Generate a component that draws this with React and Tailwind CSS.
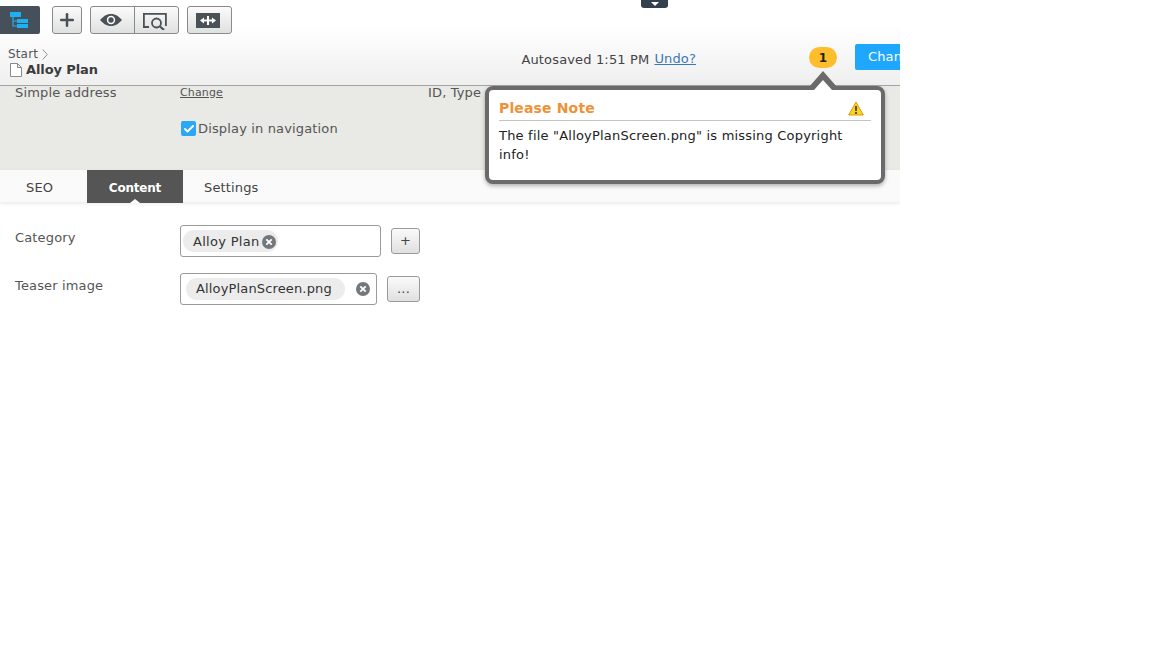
import React from 'react';
import { Plus, Check } from 'lucide-react';

const ToolButton = ({ className = '', children }) => (
  <div className={`flex h-[28px] items-center justify-center border border-[#8a8a8a] bg-gradient-to-b from-[#fbfbfb] to-[#dfe0e0] ${className}`}>
    {children}
  </div>
);

const RemoveIcon = ({ className = '' }) => (
  <svg viewBox="0 0 14 14" className={`h-[14px] w-[14px] ${className}`}>
    <circle cx="7" cy="7" r="7" fill="#74787b" />
    <path d="M4.300 4.300l5.400 5.400M9.700 4.300l-5.400 5.400" stroke="#fff" strokeWidth="1.800" />
  </svg>
);

const Header = () => (
  <div className="h-[86px] border-b border-[#a3a3a0] bg-gradient-to-b from-white from-30% to-[#efefef]">
    <div className="relative flex h-[34px] items-start pt-[6px]">
      <div className="flex h-[28px] w-[40px] items-center justify-center rounded-r-[2px] bg-[#46505a]">
        <svg viewBox="0 0 20 18" className="mr-[2px] h-[18px] w-[20px]">
          <path d="M1 1h11v5H1zM8 8h11v4H8zM8 13h11v4H8z" fill="#1eb0f0" />
          <path d="M4 6v9h4M4 10h4" stroke="#1eb0f0" strokeWidth="1.200" fill="none" />
        </svg>
      </div>
      <ToolButton className="ml-[12px] w-[30px] rounded-[3px]">
        <Plus size={20} strokeWidth={3} className="text-[#4b5257]" />
      </ToolButton>
      <div className="ml-[8px] flex">
        <ToolButton className="w-[45px] rounded-l-[3px]">
          <svg viewBox="0 0 22 12" className="mr-[4px] h-[12px] w-[22px]">
            <path d="M0 6C4 1.500 7.500 0 11 0s7 1.500 11 6c-4 4.500-7.500 6-11 6S4 10.500 0 6z" fill="#4b5257" />
            <circle cx="11" cy="6" r="4.200" fill="#fff" />
            <circle cx="11" cy="6" r="2.700" fill="#4b5257" />
          </svg>
        </ToolButton>
        <ToolButton className="-ml-px w-[45px] rounded-r-[3px]">
          <svg viewBox="0 0 26 20" className="mr-[4px] h-[20px] w-[26px]">
            <path d="M7 17H1.900V3.900h22V16" stroke="#4b5257" strokeWidth="1.800" fill="none" />
            <circle cx="14.500" cy="13" r="4.500" stroke="#4b5257" strokeWidth="1.800" fill="none" />
            <path d="M18 16.500l4 3.500" stroke="#4b5257" strokeWidth="2.200" />
          </svg>
        </ToolButton>
      </div>
      <ToolButton className="ml-[8px] w-[45px] rounded-[3px]">
        <svg viewBox="0 0 24 15" className="mr-[4px] h-[15px] w-[24px]">
          <rect width="24" height="15" fill="#4b5257" />
          <path d="M4 7.500L8 4.500v2h3V3h2v3.500h3v-2l4 3-4 3v-2h-3V12h-2V8.500H8v2z" fill="#fff" />
        </svg>
      </ToolButton>
      <div className="absolute left-[641px] top-0 flex h-[8px] w-[27px] items-end justify-center rounded-b-[3px] bg-[#33404d] pb-[2px]">
        <svg viewBox="0 0 8 4" className="h-[4px] w-[8px]"><path d="M0 0h8L4 4z" fill="#fff" /></svg>
      </div>
    </div>
    <div className="flex items-start">
      <div className="w-[487px] pl-[8px] pt-[12px]">
        <div className="flex h-[16px] items-center text-[12px] text-[#555]">
          Start
          <svg viewBox="0 0 6 12" className="ml-[4px] h-[11px] w-[6px]"><path d="M.5.5L5.500 6 .5 11.500" stroke="#8a8a8a" fill="none" /></svg>
        </div>
        <div className="flex h-[16px] items-center">
          <svg viewBox="0 0 12 14" className="ml-[2px] h-[14px] w-[12px]">
            <path d="M.5.5h7l4 4v9H.5zM7.500.5v4h4" stroke="#8a8a8a" fill="#fff" />
          </svg>
          <span className="ml-[4px] text-[13px] font-bold tracking-[-0.1px] text-[#3c3c3c]">Alloy Plan</span>
        </div>
      </div>
      <div className="flex items-start whitespace-nowrap pt-[10px]">
        <span className="ml-[35px] mt-[6px] text-[13px] text-[#444]">Autosaved 1:51 PM</span>
        <a className="ml-[5px] mt-[5px] text-[13px] text-[#3a78b8] underline">Undo?</a>
        <div className="ml-[113px] mt-[3px] flex h-[21px] w-[28px] items-center justify-center rounded-full bg-[#fdbd2c] text-[12px] font-bold text-[#222]">1</div>
        <div className="ml-[18px] h-[26px] w-[45px] overflow-hidden rounded-l-[2px] bg-[#1ea7fd] pl-[13px] pt-[3px] text-[13px] text-white">Change</div>
      </div>
    </div>
  </div>
);

const Popover = () => (
  <div className="absolute left-[485px] top-[86px] h-[98px] w-[400px] rounded-[8px] border-[4px] border-[#6a6a6a] bg-white px-[10px] pt-[9px] shadow-[0_2px_4px_rgba(0,0,0,0.3)]">
    <div className="absolute left-[320px] top-[-19px] h-0 w-0 border-x-[14px] border-b-[16px] border-x-transparent border-b-[#6a6a6a]" />
    <div className="absolute left-[325px] top-[-10px] h-0 w-0 border-x-[9px] border-b-[10px] border-x-transparent border-b-white" />
    <div className="flex h-[22px] items-center justify-between border-b border-[#c4c4c4] pb-[2px]">
      <span className="text-[14px] font-bold text-[#ef9237]">Please Note</span>
      <svg viewBox="0 0 16 15" className="mr-[7px] h-[15px] w-[16px]">
        <path d="M8 1l7.300 13H.7z" fill="#ffd21f" stroke="#d89a10" strokeLinejoin="round" />
        <path d="M8 5v5M8 11v2" stroke="#333" strokeWidth="1.600" />
      </svg>
    </div>
    <p className="mt-[5px] text-[13px] leading-[19px] tracking-[0.2px] text-[#222]">The file "AlloyPlanScreen.png" is missing Copyright info!</p>
  </div>
);

const Details = () => (
  <div className="h-[84px] bg-[#e9e9e6] text-[13px] text-[#555]">
    <div className="flex h-[13px] items-center pl-[15px]">
      <span className="w-[165px]">Simple address</span>
      <a className="mt-[1px] w-[248px] text-[11px] underline">Change</a>
      <span>ID, Type</span>
      <span className="ml-[112px]">3, Content</span>
    </div>
    <label className="ml-[181px] mt-[20px] flex items-center">
      <span className="flex h-[15px] w-[15px] items-center justify-center rounded-[2px] bg-[#2aa7f5]">
        <Check size={12} strokeWidth={4} className="text-white" />
      </span>
      <span className="ml-[2px]">Display in navigation</span>
    </label>
  </div>
);

const Tabs = () => (
  <div className="flex h-[33px] border-b border-[#f0f0f0] bg-[#fafafa] text-[13px] text-[#444] shadow-[0_1px_3px_rgba(0,0,0,0.08)]">
    <div className="w-[87px] pl-[26px] pt-[8px]">SEO</div>
    <div className="relative h-[33px] w-[96px] bg-[#555] pt-[9px] text-center text-[12px] font-bold leading-[19px] tracking-[-0.2px] text-white">
      Content
      <div className="absolute bottom-0 left-[43px] h-0 w-0 border-x-[5px] border-b-[4px] border-x-transparent border-b-white" />
    </div>
    <div className="pl-[21px] pt-[8px]">Settings</div>
  </div>
);

const Form = () => (
  <div className="pt-[22px] text-[13px] text-[#555]">
    <div className="flex items-start">
      <span className="w-[180px] pl-[15px] pt-[3px]">Category</span>
      <div className="flex h-[32px] w-[201px] items-center rounded-[3px] border border-[#9a9a9a] bg-white pl-[2px]">
        <div className="flex h-[22px] items-center rounded-full bg-[#ececec] pl-[10px] pr-[2px] text-[#333]">
          <span className="pt-[1px] tracking-[0.3px]">Alloy Plan</span>
          <RemoveIcon className="ml-[2px] mt-[1px]" />
        </div>
      </div>
      <div className="ml-[10px] mt-[3px] flex h-[26px] w-[29px] items-center justify-center rounded-[3px] border border-[#9a9a9a] bg-gradient-to-b from-[#fafafa] to-[#e0e0e0] text-[#444]">+</div>
    </div>
    <div className="mt-[16px] flex items-start">
      <span className="w-[180px] pl-[15px] pt-[3px]">Teaser image</span>
      <div className="flex h-[32px] w-[197px] items-center rounded-[3px] border border-[#9a9a9a] bg-white pl-[5px]">
        <div className="flex h-[22px] w-[159px] items-center rounded-full bg-[#ececec] pl-[10px] text-[#333]">AlloyPlanScreen.png</div>
        <RemoveIcon className="ml-[11px]" />
      </div>
      <div className="ml-[10px] mt-[3px] flex h-[26px] w-[33px] items-center justify-center rounded-[3px] border border-[#9a9a9a] bg-gradient-to-b from-[#fafafa] to-[#e0e0e0] text-[#444]">...</div>
    </div>
  </div>
);

export default function App() {
  return (
    <div className="relative h-[648px] w-[900px] overflow-hidden bg-white font-['DejaVu_Sans',sans-serif] tracking-[0.15px]">
      <Header />
      <Details />
      <Tabs />
      <Form />
      <Popover />
    </div>
  );
}
